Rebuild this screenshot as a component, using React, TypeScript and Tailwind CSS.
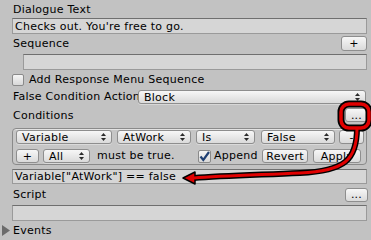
import React from "react";

function Arrows() {
  return (
    <svg width="5" height="8" viewBox="0 0 5 8" className="shrink-0">
      <polygon points="0,3 2.5,0 5,3" fill="#2a2a2a" />
      <polygon points="0,5 2.5,8 5,5" fill="#2a2a2a" />
    </svg>
  );
}

function Popup({ label, className }: { label: string; className?: string }) {
  return (
    <div
      className={
        "flex h-[14px] items-center justify-between rounded-[3px] border border-[#8e8e8e] bg-linear-to-b from-[#f7f7f7] to-[#dadada] pl-[5px] pr-[5px] leading-none shadow-[0_1px_0_rgba(255,255,255,0.35)] " +
        (className ?? "")
      }
    >
      <span className="whitespace-nowrap">{label}</span>
      <Arrows />
    </div>
  );
}

function Btn({ label, className }: { label: string; className?: string }) {
  return (
    <div
      className={
        "flex h-[14px] items-center justify-center rounded-[3px] border border-[#8e8e8e] bg-linear-to-b from-[#f7f7f7] to-[#dadada] leading-none " +
        (className ?? "")
      }
    >
      <span className="whitespace-nowrap">{label}</span>
    </div>
  );
}

function Field({ text, className }: { text?: string; className?: string }) {
  return (
    <div
      className={
        "flex items-center border border-[#9a9a9a] border-t-[#6f6f6f] bg-[#d6d6d6] pl-[2px] leading-none " +
        (className ?? "")
      }
    >
      {text ? <span className="whitespace-nowrap">{text}</span> : null}
    </div>
  );
}

export default function App() {
  return (
    <div className="relative h-[240px] w-[371px] overflow-hidden bg-[#c2c2c2] font-['DejaVu_Sans',sans-serif] text-[11px] tracking-[0.25px] text-black">
      <div className="flex h-[18px] items-center pl-[13px]">
        <span className="pt-[2px]">Dialogue Text</span>
      </div>
      <Field text="Checks out. You're free to go." className="ml-[12px] mr-[4px] h-[16px]" />
      <div className="flex h-[18px] items-center justify-between pl-[13px] pr-[4px]">
        <span className="pt-[2px]">Sequence</span>
        <Btn label="+" className="h-[15px] w-[26px]" />
      </div>
      <Field className="ml-[23px] mr-[4px] mt-[2px] h-[16px]" />
      <div className="flex h-[20px] items-center pl-[12px]">
        <div className="h-[12px] w-[12px] rounded-[2px] border border-[#8a8a8a] bg-linear-to-b from-[#f5f5f5] to-[#d8d8d8]" />
        <span className="ml-[5px] whitespace-nowrap pt-[1px]">Add Response Menu Sequence</span>
      </div>
      <div className="flex h-[14px] items-center pl-[13px] pr-[5px]">
        <span className="w-[125px] shrink-0 whitespace-nowrap">False Condition Action</span>
        <Popup label="Block" className="h-[13px] flex-1" />
      </div>
      <div className="flex h-[22px] items-center justify-between pl-[13px] pr-[3px]">
        <span className="pt-[2px]">Conditions</span>
        <Btn label="..." className="w-[23px]" />
      </div>
      <div className="ml-[12px] mr-[4px] mt-[2px] flex h-[37px] flex-col gap-[4px] rounded-[4px] border border-[#8a8a8a] bg-[#c6c6c6] pl-[3px] pt-[1px] shadow-[inset_0_1px_0_rgba(255,255,255,0.5)]">
        <div className="flex items-center">
          <Popup label="Variable" className="w-[96px]" />
          <Popup label="AtWork" className="ml-[5px] w-[74px]" />
          <Popup label="Is" className="ml-[5px] w-[59px]" />
          <Popup label="False" className="ml-[6px] w-[74px]" />
          <Btn label="-" className="ml-[4px] w-[25px]" />
        </div>
        <div className="flex items-center">
          <Btn label="+" className="w-[23px]" />
          <Popup label="All" className="ml-[4px] w-[47px]" />
          <span className="ml-[7px] w-[101px] shrink-0 whitespace-nowrap">must be true.</span>
          <div className="flex h-[13px] w-[13px] shrink-0 items-center justify-center rounded-[2px] border border-[#8a8a8a] bg-linear-to-b from-[#f5f5f5] to-[#d8d8d8]">
            <svg width="11" height="11" viewBox="0 0 11 11">
              <path d="M1.5 5.5 L4.3 9 L10 1" fill="none" stroke="#1f3f73" strokeWidth="2.2" />
            </svg>
          </div>
          <span className="ml-[3px] w-[48px] shrink-0 whitespace-nowrap">Append</span>
          <Btn label="Revert" className="w-[46px] shrink-0" />
          <Btn label="Apply" className="ml-[5px] w-[48px] shrink-0" />
        </div>
      </div>
      <Field text={'Variable["AtWork"] == false'} className="ml-[12px] mr-[4px] mt-[4px] h-[15px]" />
      <div className="flex h-[21px] items-center justify-between pl-[13px] pr-[3px]">
        <span className="pt-[2px]">Script</span>
        <Btn label="..." className="w-[23px]" />
      </div>
      <Field className="ml-[12px] mr-[4px] h-[16px]" />
      <div className="flex h-[19px] items-center pl-[2px]">
        <svg width="9" height="11" viewBox="0 0 9 11" className="shrink-0">
          <polygon points="0,0 8,5.5 0,11" fill="#6b6b6b" />
        </svg>
        <span className="ml-[2px] pt-[2px]">Events</span>
      </div>

      <svg className="pointer-events-none absolute left-0 top-0" width="371" height="240" viewBox="0 0 371 240">
        <rect x="341" y="104" width="28" height="24" rx="8" fill="none" stroke="#000" strokeWidth="7" />
        <path d="M357 128 C357 160, 345 171, 300 173 S220 176, 194 178" fill="none" stroke="#000" strokeWidth="6" />
        <polygon points="183,178 195,172 195,184" fill="#e00000" stroke="#000" strokeWidth="1.5" strokeLinejoin="round" />
        <rect x="341" y="104" width="28" height="24" rx="8" fill="none" stroke="#e00000" strokeWidth="3.5" />
        <path d="M357 128 C357 160, 345 171, 300 173 S220 176, 194 178" fill="none" stroke="#e00000" strokeWidth="3" />
      </svg>
    </div>
  );
}
